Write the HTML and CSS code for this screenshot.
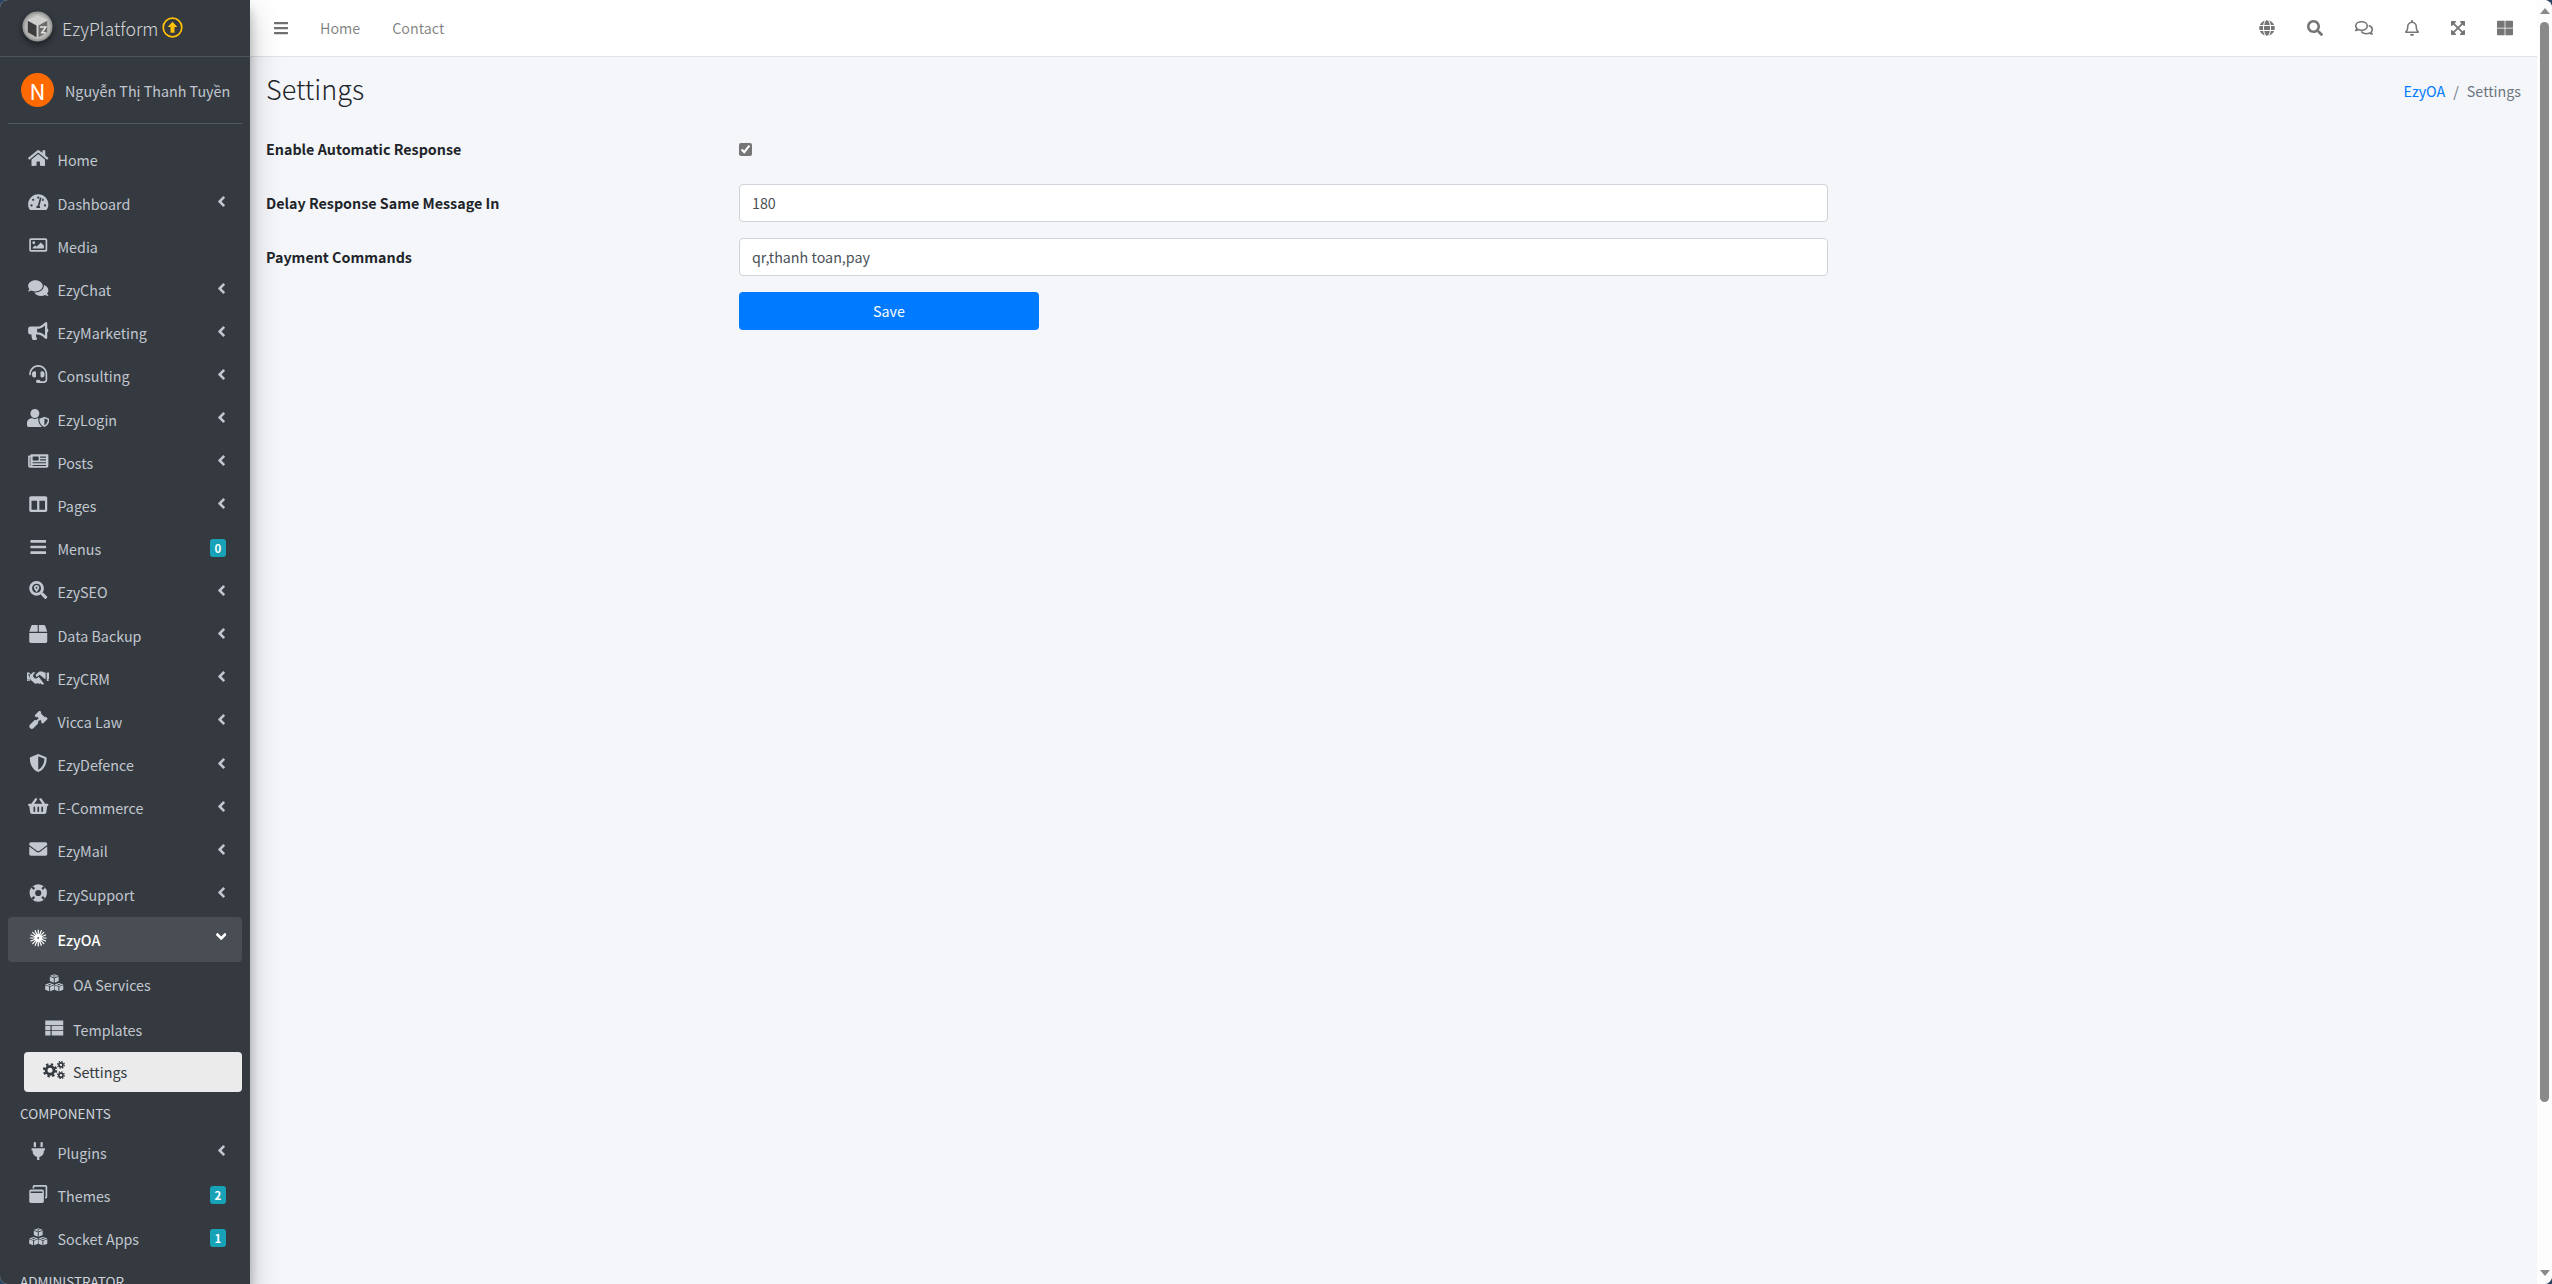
FILE: index.html
```html
<!DOCTYPE html>
<html lang="en">
<head>
<meta charset="utf-8">
<title>Settings</title>
<link rel="stylesheet" href="styles.css">
</head>
<body>
<svg class="defs" aria-hidden="true">
<symbol id="i-left" viewBox="0 0 256 512"><path d="M31.7 239l136-136c9.4-9.4 24.6-9.4 33.9 0l22.6 22.6c9.4 9.4 9.4 24.6 0 33.9L127.9 256l96.4 96.4c9.4 9.4 9.4 24.6 0 33.9L201.7 409c-9.4 9.4-24.6 9.4-33.9 0l-136-136c-9.5-9.4-9.5-24.6-.1-34z"/></symbol>
<symbol id="i-down" viewBox="0 0 320 512"><path d="M143 352.3L7 216.3c-9.4-9.4-9.4-24.6 0-33.9l22.6-22.6c9.4-9.4 24.6-9.4 33.9 0l96.4 96.4 96.4-96.4c9.4-9.4 24.6-9.4 33.9 0l22.6 22.6c9.4 9.4 9.4 24.6 0 33.9l-136 136c-9.2 9.4-24.4 9.4-33.8 0z"/></symbol>
<symbol id="i-home" viewBox="0 0 576 512"><path d="M280.37 148.26L96 300.11V464a16 16 0 0 0 16 16l112.06-.29a16 16 0 0 0 15.92-16V368a16 16 0 0 1 16-16h64a16 16 0 0 1 16 16v95.64a16 16 0 0 0 16 16.05L464 480a16 16 0 0 0 16-16V300L295.67 148.26a12.19 12.19 0 0 0-15.3 0zM571.6 251.47L488 182.56V44.05a12 12 0 0 0-12-12h-56a12 12 0 0 0-12 12v72.61L318.47 43a48 48 0 0 0-61 0L4.34 251.47a12 12 0 0 0-1.6 16.9l25.5 31A12 12 0 0 0 45.15 301l235.22-193.74a12.19 12.19 0 0 1 15.3 0L530.9 301a12 12 0 0 0 16.9-1.6l25.5-31a12 12 0 0 0-1.7-16.93z"/></symbol>
<symbol id="i-gauge" viewBox="0 0 576 512"><path fill-rule="evenodd" d="M288 32C129 32 0 161 0 320c0 53 14 102 39 145 6 9 16 15 27 15h444c11 0 21-6 27-15 25-43 39-92 39-145C576 161 447 32 288 32zM288 96a32 32 0 1 1 0 64 32 32 0 0 1 0-64zM96 384a32 32 0 1 1 0-64 32 32 0 0 1 0 64zM144 224a32 32 0 1 1 0-64 32 32 0 0 1 0 64zM340 424H236a56 56 0 0 1 40-69l56-210c3-13 16-20 29-17s20 16 17 29l-56 208a56 56 0 0 1 18 59zM420 224l-30-8 16-56a32 32 0 1 1 14 64zM480 384a32 32 0 1 1 0-64 32 32 0 0 1 0 64z"/></symbol>
<symbol id="i-image" viewBox="0 0 512 512"><path fill-rule="evenodd" d="M464 64H48C21.500 64 0 85.500 0 112v288c0 26.500 21.500 48 48 48h416c26.500 0 48-21.500 48-48V112c0-26.500-21.500-48-48-48zM458 400H54a6 6 0 0 1-6-6V118a6 6 0 0 1 6-6h404a6 6 0 0 1 6 6v276a6 6 0 0 1-6 6zM128 152a40 40 0 1 0 0 80 40 40 0 0 0 0-80zM96 352h320v-80l-88-88-120 120-40-40-72 72z"/></symbol>
<symbol id="i-comments" viewBox="0 0 576 512"><path d="M416 192c0-88.400-93.100-160-208-160S0 103.600 0 192c0 34.300 14.100 65.900 38 92-13.400 30.200-35.500 54.200-35.800 54.500-2.200 2.300-2.800 5.700-1.500 8.700S4.800 352 8 352c36.600 0 66.900-12.300 88.700-25 32.200 15.700 70.300 25 111.300 25 114.900 0 208-71.600 208-160zm122 220c23.900-26 38-57.700 38-92 0-66.900-53.500-124.200-129.300-148.100.9 6.600 1.300 13.300 1.300 20.100 0 105.900-107.700 192-240 192-10.800 0-21.300-.8-31.700-1.900C207.800 439.600 281.800 480 368 480c41 0 79.100-9.200 111.300-25 21.800 12.700 52.100 25 88.700 25 3.200 0 6.100-1.900 7.300-4.800 1.300-2.900.7-6.300-1.500-8.700-.3-.3-22.400-24.200-35.800-54.500z"/></symbol>
<symbol id="i-bullhorn" viewBox="0 0 576 512"><path d="M576 240c0-23.630-12.950-44.040-32-55.120V32.010C544 23.260 537.020 0 512 0c-7.120 0-14.190 2.380-19.980 7.020l-85.030 68.030C364.280 109.190 310.660 128 256 128H64c-35.350 0-64 28.650-64 64v96c0 35.350 28.650 64 64 64h33.700c-1.390 10.480-2.180 21.140-2.180 32 0 39.770 9.260 77.350 25.560 110.940 5.190 10.690 16.520 17.060 28.400 17.060h74.280c26.050 0 41.690-29.840 25.900-50.560-16.400-21.520-26.150-48.360-26.150-77.440 0-11.110 1.620-21.790 4.410-32H256c54.660 0 108.280 18.810 150.980 52.950l85.030 68.030a32.023 32.023 0 0 0 19.980 7.020c24.920 0 32-22.780 32-32V295.130C563.050 284.040 576 263.630 576 240zm-96 141.420l-33.050-26.440C392.950 311.780 325.120 288 256 288v-96c69.120 0 136.950-23.780 190.950-66.980L480 98.580v282.840z"/></symbol>
<symbol id="i-headset" viewBox="0 0 512 512"><path d="M192 208c0-17.670-14.330-32-32-32h-16c-35.350 0-64 28.650-64 64v48c0 35.350 28.650 64 64 64h16c17.670 0 32-14.330 32-32V208zm176 144c35.350 0 64-28.650 64-64v-48c0-35.350-28.650-64-64-64h-16c-17.670 0-32 14.330-32 32v112c0 17.670 14.330 32 32 32h16zM256 0C113.180 0 4.750 118.830 0 256v16c0 8.840 7.160 16 16 16h16c8.840 0 16-7.160 16-16v-16c0-114.690 93.310-208 208-208s208 93.310 208 208h-.12c.08 2.430.12 165.720.12 165.720 0 23.350-18.930 42.280-42.280 42.280H320c0-26.510-21.490-48-48-48h-32c-26.510 0-48 21.490-48 48s21.490 48 48 48h181.720c49.860 0 90.280-40.420 90.280-90.280V256C507.250 118.830 398.820 0 256 0z"/></symbol>
<symbol id="i-usershield" viewBox="0 0 640 512"><path fill-rule="evenodd" d="M224 256a128 128 0 1 0 0-256 128 128 0 0 0 0 256zM622 270l-115-45a32 32 0 0 0-23 0l-115 45c-11 4-17 14-17 25 0 111 68 188 132 213a32 32 0 0 0 23 0c51-20 132-89 132-213 0-11-6-21-17-25zM496 462V267l96 38c-2 72-44 131-96 157zM320 295c0-10 3-20 8-28-5-1-10-1-16-1h-17a174 174 0 0 1-142 0h-17C61 266 0 327 0 402v62c0 26 21 48 48 48h352c9 0 17-3 24-6-58-42-104-117-104-211z"/></symbol>
<symbol id="i-news" viewBox="0 0 576 512"><path fill-rule="evenodd" d="M552 64H88c-13 0-24 11-24 24v8H24c-13 0-24 11-24 24v272c0 31 25 56 56 56h472c27 0 48-21 48-48V88c0-13-11-24-24-24zM56 400a8 8 0 0 1-8-8V144h16v248a8 8 0 0 1-8 8zM140 128h148a12 12 0 0 1 12 12v88a12 12 0 0 1-12 12H140a12 12 0 0 1-12-12v-88a12 12 0 0 1 12-12zM340 128h168v32H340zM340 208h168v32H340zM128 288h380v32H128zM128 368h380v32H128z"/></symbol>
<symbol id="i-columns" viewBox="0 0 512 512"><path fill-rule="evenodd" d="M464 32H48C21.500 32 0 53.500 0 80v352c0 26.500 21.500 48 48 48h416c26.500 0 48-21.500 48-48V80c0-26.500-21.500-48-48-48zM224 416H64V160h160v256zm224 0H288V160h160v256z"/></symbol>
<symbol id="i-bars" viewBox="0 0 448 512"><path d="M16 132h416c8.837 0 16-7.163 16-16V76c0-8.837-7.163-16-16-16H16C7.163 60 0 67.163 0 76v40c0 8.837 7.163 16 16 16zm0 160h416c8.837 0 16-7.163 16-16v-40c0-8.837-7.163-16-16-16H16c-8.837 0-16 7.163-16 16v40c0 8.837 7.163 16 16 16zm0 160h416c8.837 0 16-7.163 16-16v-40c0-8.837-7.163-16-16-16H16c-8.837 0-16 7.163-16 16v40c0 8.837 7.163 16 16 16z"/></symbol>
<symbol id="i-seo" viewBox="0 0 512 512"><path fill-rule="evenodd" d="M505 442.700L405.300 343c-4.500-4.500-10.600-7-17-7H372c27.600-35.300 44-79.700 44-128C416 93.100 322.900 0 208 0S0 93.100 0 208s93.100 208 208 208c48.300 0 92.700-16.400 128-44v16.300c0 6.400 2.500 12.500 7 17l99.700 99.700c9.400 9.400 24.600 9.400 33.900 0l28.300-28.300c9.400-9.400 9.400-24.600.1-34zM208 336c-70.700 0-128-57.200-128-128 0-70.700 57.200-128 128-128 70.700 0 128 57.200 128 128 0 70.700-57.200 128-128 128zM208 112c-43 0-78 34-78 76 0 33 48 94 66 116a15 15 0 0 0 24 0c18-22 66-83 66-116 0-42-35-76-78-76zm0 104a26 26 0 1 1 0-52 26 26 0 0 1 0 52z"/></symbol>
<symbol id="i-box" viewBox="0 0 512 512"><path d="M509.500 184.600L458.900 32.800C452.400 13.200 434.100 0 413.400 0H272v192h238.700c-.4-2.500-.4-5-1.200-7.400zM240 0H98.600c-20.700 0-39 13.200-45.500 32.800L2.500 184.600c-.8 2.400-.8 4.900-1.200 7.400H240V0zM0 224v240c0 26.500 21.500 48 48 48h416c26.500 0 48-21.500 48-48V224H0z"/></symbol>
<symbol id="i-hands" viewBox="0 0 640 512"><path fill-rule="evenodd" d="M0 128h64c9 0 16 7 16 16v208c0 9-7 16-16 16H0zM32 320a16 16 0 1 0 0 32 16 16 0 0 0 0-32zM640 128h-64c-9 0-16 7-16 16v208c0 9 7 16 16 16h64zM608 320a16 16 0 1 1 0 32 16 16 0 0 1 0-32zM434 96h-72c-8 0-16 3-22 9l-82 75c-17 16-17 44 0 60 15 13 38 12 52-3l50-45 155 125 15-17V128h-50c-14-21-30-32-46-32zM112 352h14l90 81c27 22 66 18 88-8l18 15c18 15 44 12 59-6l31 25c20 17 50 14 66-6 2-3 4-5 5-8L336 250l-30 27c-32 29-82 27-111-5-29-31-27-80 4-109l44-41h-51c-17 0-33 7-45 19l-35 35h-80z"/></symbol>
<symbol id="i-gavel" viewBox="0 0 512 512"><path d="M504 192l-23-23c-9-9-25-9-34 0l-6 6-113-113 6-6c9-9 9-25 0-34L311 0c-9-9-25-9-34 0L164 113c-9 9-9 25 0 34l23 23c9 9 25 9 34 0l6-6 40 40-68 68-6-6c-12-12-33-12-45 0L19 394c-25 25-25 66 0 91l8 8c25 25 66 25 91 0l128-128c12-12 12-33 0-45l-6-6 68-68 40 40-6 6c-9 9-9 25 0 34l23 23c9 9 25 9 34 0l113-113c9-9 9-25 0-34z"/></symbol>
<symbol id="i-shield" viewBox="0 0 512 512"><path d="M466.500 83.700l-192-80a48.150 48.150 0 0 0-36.900 0l-192 80C27.700 91.100 16 108.600 16 128c0 198.500 114.500 335.700 221.500 380.300 11.800 4.900 25.100 4.900 36.900 0C360.100 472.600 496 349.300 496 128c0-19.400-11.700-36.900-29.500-44.300zM256.100 446.300l-.1-381 175.900 73.300c-3.300 151.400-82.100 261.100-175.800 307.700z"/></symbol>
<symbol id="i-basket" viewBox="0 0 576 512"><path fill-rule="evenodd" d="M576 216v16c0 13-11 24-24 24h-8l-26 183c-3 24-24 41-48 41H106c-24 0-45-17-48-41L32 256h-8c-13 0-24-11-24-24v-16c0-13 11-24 24-24h67L198 46c10-14 29-18 44-8 15 10 18 29 8 44l-80 110h236l-80-110c-10-15-7-34 8-44 15-10 34-6 44 8l107 146h67c13 0 24 11 24 24zM312 296c0-13-11-24-24-24s-24 11-24 24v112c0 13 11 24 24 24s24-11 24-24zM424 296c0-13-11-24-24-24s-24 11-24 24v112c0 13 11 24 24 24s24-11 24-24zM200 296c0-13-11-24-24-24s-24 11-24 24v112c0 13 11 24 24 24s24-11 24-24z"/></symbol>
<symbol id="i-envelope" viewBox="0 0 512 512"><path d="M502.300 190.800c3.900-3.100 9.700-.2 9.700 4.700V400c0 26.500-21.500 48-48 48H48c-26.500 0-48-21.500-48-48V195.600c0-5 5.700-7.800 9.700-4.700 22.400 17.400 52.100 39.500 154.100 113.600 21.100 15.400 56.700 47.800 92.200 47.600 35.700.3 72-32.800 92.300-47.600 102-74.100 131.600-96.300 154-113.700zM256 320c23.200.4 56.600-29.200 73.400-41.400 132.700-96.300 142.800-104.700 173.400-128.700 5.800-4.500 9.200-11.500 9.200-18.900v-19c0-26.500-21.500-48-48-48H48C21.500 64 0 85.500 0 112v19c0 7.400 3.400 14.300 9.200 18.900 30.600 23.900 40.700 32.400 173.400 128.700 16.800 12.200 50.200 41.800 73.400 41.400z"/></symbol>
<symbol id="i-ring" viewBox="0 0 512 512"><path fill-rule="evenodd" d="M256 8a248 248 0 1 0 0 496 248 248 0 0 0 0-496zM256 168a88 88 0 1 1 0 176 88 88 0 0 1 0-176zM108 64l60 60a170 170 0 0 0-44 44l-60-60a250 250 0 0 1 44-44zM404 64a250 250 0 0 1 44 44l-60 60a170 170 0 0 0-44-44zM64 404l60-60a170 170 0 0 0 44 44l-60 60a250 250 0 0 1-44-44zM448 404a250 250 0 0 1-44 44l-60-60a170 170 0 0 0 44-44z"/></symbol>
<symbol id="i-burst" viewBox="0 0 32 32"><g stroke="currentColor" stroke-width="2.200" stroke-linecap="round"><path d="M16 2v28M2 16h28M6.100 6.100l19.800 19.800M25.900 6.100L6.100 25.900M10.600 3l10.800 26M21.400 3L10.600 29M3 10.600l26 10.800M29 10.600L3 21.400"/></g><circle cx="16" cy="16" r="6.500"/><circle cx="16" cy="16" r="1.600" fill="#4b5055"/></symbol>
<symbol id="i-cubes" viewBox="0 0 512 450"><g fill-rule="evenodd"><path d="M256 6l114 42-114 42-114-42zM256 32l-44 16 44 16 44-16zM146 66l98 38v112l-98-40zM268 104l98-38v110l-98 40z"/><path transform="translate(-116 216)" d="M256 6l114 42-114 42-114-42zM256 32l-44 16 44 16 44-16zM146 66l98 38v112l-98-40zM268 104l98-38v110l-98 40z"/><path transform="translate(116 216)" d="M256 6l114 42-114 42-114-42zM256 32l-44 16 44 16 44-16zM146 66l98 38v112l-98-40zM268 104l98-38v110l-98 40z"/></g></symbol>
<symbol id="i-table" viewBox="0 0 512 512"><path d="M0 40h512v128H0zM0 192h150v128H0zM182 192h330v128H182zM0 344h150v128H0zM182 344h330v128H182z"/></symbol>
<symbol id="i-cogs" viewBox="0 0 640 512"><circle cx="200" cy="264" r="112" fill="none" stroke="currentColor" stroke-width="80"/><circle cx="200" cy="264" r="172" fill="none" stroke="currentColor" stroke-width="64" stroke-dasharray="68 67"/><circle cx="510" cy="110" r="58" fill="none" stroke="currentColor" stroke-width="48"/><circle cx="510" cy="110" r="96" fill="none" stroke="currentColor" stroke-width="36" stroke-dasharray="38 37.400"/><circle cx="510" cy="402" r="58" fill="none" stroke="currentColor" stroke-width="48"/><circle cx="510" cy="402" r="96" fill="none" stroke="currentColor" stroke-width="36" stroke-dasharray="38 37.400"/></symbol>
<symbol id="i-plug" viewBox="0 0 384 512"><path d="M96 0c18 0 32 14 32 32v112H64V32C64 14 78 0 96 0zM288 0c18 0 32 14 32 32v112h-64V32c0-18 14-32 32-32zM16 176h352c9 0 16 7 16 16v32c0 9-7 16-16 16h-16v32c0 77-55 142-128 157v83h-64v-83C87 414 32 349 32 272v-32H16c-9 0-16-7-16-16v-32c0-9 7-16 16-16z"/></symbol>
<symbol id="i-themes" viewBox="0 0 512 512"><path fill-rule="evenodd" d="M48 128h320c26 0 48 22 48 48v288c0 26-22 48-48 48H48c-26 0-48-22-48-48V176c0-26 22-48 48-48zM40 184v40h336v-40zM144 0h320c26 0 48 22 48 48v288c0 26-22 48-48 48h-16v-48h16V48H144v48H96V48c0-26 22-48 48-48z"/></symbol>
<symbol id="i-globe" viewBox="0 0 496 512"><path d="M336.500 160C322 70.700 287.800 8 248 8s-74 62.700-88.500 152h177zM152 256c0 22.200 1.200 43.500 3.300 64h185.300c2.100-20.500 3.300-41.800 3.300-64s-1.200-43.500-3.300-64H155.300c-2.100 20.500-3.300 41.800-3.300 64zm324.700-96c-28.600-67.900-86.500-120.400-158-141.600 24.400 33.800 41.200 84.700 50 141.600h108zM177.200 18.400C105.800 39.600 47.800 92.100 19.300 160h108c8.700-56.900 25.500-107.800 49.900-141.600zM487.400 192H372.700c2.100 21 3.300 42.500 3.300 64s-1.200 43-3.300 64h114.600c5.500-20.500 8.600-41.800 8.600-64s-3.100-43.500-8.500-64zM120 256c0-21.500 1.200-43 3.300-64H8.600C3.200 212.500 0 233.800 0 256s3.200 43.500 8.600 64h114.600c-2-21-3.200-42.500-3.200-64zm39.500 96c14.500 89.300 48.700 152 88.500 152s74-62.700 88.500-152h-177zm159.300 141.600c71.400-21.200 129.400-73.700 158-141.600h-108c-8.800 56.900-25.600 107.800-50 141.600zM19.300 352c28.600 67.900 86.500 120.400 158 141.600-24.400-33.800-41.200-84.700-50-141.600h-108z"/></symbol>
<symbol id="i-search" viewBox="0 0 512 512"><path d="M505 442.700L405.300 343c-4.500-4.500-10.600-7-17-7H372c27.600-35.300 44-79.700 44-128C416 93.100 322.900 0 208 0S0 93.100 0 208s93.100 208 208 208c48.300 0 92.700-16.400 128-44v16.300c0 6.400 2.500 12.500 7 17l99.700 99.700c9.400 9.400 24.600 9.400 33.900 0l28.300-28.300c9.400-9.400 9.400-24.600.1-34zM208 336c-70.700 0-128-57.200-128-128 0-70.700 57.200-128 128-128 70.700 0 128 57.200 128 128 0 70.700-57.200 128-128 128z"/></symbol>
<symbol id="i-chat" viewBox="0 0 576 512"><g fill="none" stroke="currentColor" stroke-width="50" stroke-linejoin="round"><path d="M208 56C104 56 24 114 24 192c0 32 14 60 38 84-8 24-24 42-38 56 30-2 56-14 76-28 32 14 68 24 108 24 104 0 184-58 184-136S312 56 208 56z"/><path d="M440 178c64 20 112 70 112 128 0 32-14 60-38 84 8 24 24 42 38 56-30-2-56-14-76-28-32 14-68 24-108 24-72 0-136-30-166-76"/></g></symbol>
<symbol id="i-bell" viewBox="0 0 448 512"><path d="M224 512c35 0 64-29 64-64H160c0 35 29 64 64 64zM439 362c-19-21-55-52-55-154 0-78-54-140-128-155V32a32 32 0 0 0-64 0v21C118 68 64 130 64 208c0 102-36 133-55 154-6 6-9 14-9 22 0 16 13 32 32 32h384c19 0 32-16 32-32 0-8-3-16-9-22zM67 368c21-28 45-73 45-160v-1c0-62 50-111 112-111s112 49 112 112c0 87 24 132 45 160z"/></symbol>
<symbol id="i-expand" viewBox="0 0 448 512"><path d="M448 344v112a24 24 0 0 1-24 24H312c-21 0-32-26-17-41l36-36-107-107-107 107 36 36c15 15 4 41-17 41H24a24 24 0 0 1-24-24V344c0-21 26-32 41-17l36 36 107-107L77 149l-36 36c-15 15-41 4-41-17V56a24 24 0 0 1 24-24h112c21 0 32 26 17 41l-36 36 107 107 107-107-36-36c-15-15-4-41 17-41h112a24 24 0 0 1 24 24v112c0 21-26 32-41 17l-36-36-107 107 107 107 36-36c15-15 41-4 41 17z"/></symbol>
<symbol id="i-grid" viewBox="0 0 512 512"><path d="M24 24h220v220H0V48c0-13 11-24 24-24zM268 24h220c13 0 24 11 24 24v196H268zM0 268h244v220H24c-13 0-24-11-24-24zM268 268h244v196c0 13-11 24-24 24H268z"/></symbol>
<symbol id="i-up" viewBox="0 0 24 24"><circle cx="12" cy="12" r="10.600" fill="none" stroke="currentColor" stroke-width="2"/><path d="M12 5.500l5.600 6h-3.300V18H9.700v-6.500H6.400z"/></symbol>
</svg>

<div class="app">
  <aside class="sidebar">
    <div class="brand">
      <svg class="logo" viewBox="0 0 32 32"><circle cx="16" cy="16" r="15.500" fill="#9a9a98"/><circle cx="16" cy="16" r="13.500" fill="#b5b5b3"/><path d="M16 4l10 5v13l-10 6-10-6V9z" fill="#cfcfcd"/><path d="M6 10l9 5v12l-9-5z" fill="#3d3d3d"/><path d="M17 15l9-5v12l-9 5z" fill="#6d6d6b"/><path d="M18.500 16.500h6l-4 6h4" fill="none" stroke="#e4e4e2" stroke-width="1.600"/></svg>
      <span class="brand-name">EzyPlatform</span>
      <svg class="brand-up"><use href="#i-up"/></svg>
    </div>
    <div class="user">
      <span class="avatar">N</span>
      <span class="user-name">Nguyễn Thị Thanh Tuyền</span>
    </div>
    <nav class="nav">
      <a class="item"><svg class="ic"><use href="#i-home"/></svg><span class="lbl">Home</span></a>
      <a class="item"><svg class="ic"><use href="#i-gauge"/></svg><span class="lbl">Dashboard</span><svg class="chev"><use href="#i-left"/></svg></a>
      <a class="item"><svg class="ic"><use href="#i-image"/></svg><span class="lbl">Media</span></a>
      <a class="item"><svg class="ic"><use href="#i-comments"/></svg><span class="lbl">EzyChat</span><svg class="chev"><use href="#i-left"/></svg></a>
      <a class="item"><svg class="ic"><use href="#i-bullhorn"/></svg><span class="lbl">EzyMarketing</span><svg class="chev"><use href="#i-left"/></svg></a>
      <a class="item"><svg class="ic"><use href="#i-headset"/></svg><span class="lbl">Consulting</span><svg class="chev"><use href="#i-left"/></svg></a>
      <a class="item"><svg class="ic"><use href="#i-usershield"/></svg><span class="lbl">EzyLogin</span><svg class="chev"><use href="#i-left"/></svg></a>
      <a class="item"><svg class="ic"><use href="#i-news"/></svg><span class="lbl">Posts</span><svg class="chev"><use href="#i-left"/></svg></a>
      <a class="item"><svg class="ic"><use href="#i-columns"/></svg><span class="lbl">Pages</span><svg class="chev"><use href="#i-left"/></svg></a>
      <a class="item"><svg class="ic"><use href="#i-bars"/></svg><span class="lbl">Menus</span><span class="badge">0</span></a>
      <a class="item"><svg class="ic"><use href="#i-seo"/></svg><span class="lbl">EzySEO</span><svg class="chev"><use href="#i-left"/></svg></a>
      <a class="item"><svg class="ic"><use href="#i-box"/></svg><span class="lbl">Data Backup</span><svg class="chev"><use href="#i-left"/></svg></a>
      <a class="item"><svg class="ic"><use href="#i-hands"/></svg><span class="lbl">EzyCRM</span><svg class="chev"><use href="#i-left"/></svg></a>
      <a class="item"><svg class="ic"><use href="#i-gavel"/></svg><span class="lbl">Vicca Law</span><svg class="chev"><use href="#i-left"/></svg></a>
      <a class="item"><svg class="ic"><use href="#i-shield"/></svg><span class="lbl">EzyDefence</span><svg class="chev"><use href="#i-left"/></svg></a>
      <a class="item"><svg class="ic"><use href="#i-basket"/></svg><span class="lbl">E-Commerce</span><svg class="chev"><use href="#i-left"/></svg></a>
      <a class="item"><svg class="ic"><use href="#i-envelope"/></svg><span class="lbl">EzyMail</span><svg class="chev"><use href="#i-left"/></svg></a>
      <a class="item"><svg class="ic"><use href="#i-ring"/></svg><span class="lbl">EzySupport</span><svg class="chev"><use href="#i-left"/></svg></a>
      <a class="item open"><svg class="ic"><use href="#i-burst"/></svg><span class="lbl">EzyOA</span><svg class="chev chev-down"><use href="#i-down"/></svg></a>
      <a class="item sub sub-first"><svg class="ic"><use href="#i-cubes"/></svg><span class="lbl">OA Services</span></a>
      <a class="item sub sub-second"><svg class="ic"><use href="#i-table"/></svg><span class="lbl">Templates</span></a>
      <a class="item sub current"><svg class="ic"><use href="#i-cogs"/></svg><span class="lbl">Settings</span></a>
      <div class="section">COMPONENTS</div>
      <a class="item"><svg class="ic"><use href="#i-plug"/></svg><span class="lbl">Plugins</span><svg class="chev"><use href="#i-left"/></svg></a>
      <a class="item"><svg class="ic"><use href="#i-themes"/></svg><span class="lbl">Themes</span><span class="badge">2</span></a>
      <a class="item"><svg class="ic"><use href="#i-cubes"/></svg><span class="lbl">Socket Apps</span><span class="badge">1</span></a>
      <div class="section">ADMINISTRATOR</div>
    </nav>
  </aside>

  <div class="main">
    <header class="topbar">
      <svg class="top-burger"><use href="#i-bars"/></svg>
      <a class="top-link">Home</a>
      <a class="top-link">Contact</a>
      <div class="top-icons">
        <svg class="top-ic"><use href="#i-globe"/></svg>
        <svg class="top-ic"><use href="#i-search"/></svg>
        <svg class="top-ic top-ic-wide"><use href="#i-chat"/></svg>
        <svg class="top-ic top-ic-narrow"><use href="#i-bell"/></svg>
        <svg class="top-ic top-ic-narrow"><use href="#i-expand"/></svg>
        <svg class="top-ic"><use href="#i-grid"/></svg>
      </div>
    </header>
    <section class="content">
      <div class="heading">
        <h1 class="title">Settings</h1>
        <div class="crumbs"><a class="crumb-link">EzyOA</a><span class="crumb-sep">/</span><span class="crumb-cur">Settings</span></div>
      </div>
      <form class="form">
        <label class="field-label">Enable Automatic Response</label>
        <div class="field"><input class="check" type="checkbox" checked></div>
        <label class="field-label">Delay Response Same Message In</label>
        <div class="field"><input class="input" type="text" value="180"></div>
        <label class="field-label">Payment Commands</label>
        <div class="field"><input class="input" type="text" value="qr,thanh toan,pay"></div>
        <span></span>
        <div class="field"><button class="save" type="button">Save</button></div>
      </form>
    </section>
  </div>

  <div class="scrollbar">
    <span class="arrow arrow-up"></span>
    <span class="thumb"></span>
    <span class="arrow arrow-down"></span>
  </div>
</div>
</body>
</html>
```
FILE: styles.css
```css
* { box-sizing: border-box; }
html, body { margin: 0; height: 100%; overflow: hidden; }
html { background: #2b4465; }
body {
  font-family: "Noto Sans CJK SC", "Noto Sans", sans-serif;
  font-size: 14.300px;
  color: #212529;
}
.defs { display: none; }
svg { fill: currentColor; display: block; flex: none; }

.app { display: flex; height: 1284px; background: #f4f6f9; border-radius: 8px; overflow: hidden; }

/* sidebar */
.sidebar {
  width: 250px;
  flex: none;
  height: 100%;
  overflow: hidden;
  background: #343a40;
  color: #c2c7d0;
  box-shadow: 0 14px 28px rgba(0,0,0,.25), 0 10px 10px rgba(0,0,0,.22);
  position: relative;
  z-index: 2;
}
.brand {
  height: 57px;
  display: flex;
  align-items: center;
  padding-left: 22px;
  border-bottom: 1px solid #4b545c;
}
.logo { width: 31px; height: 31px; margin-top: -3px; border-radius: 50%; box-shadow: 0 3px 6px rgba(0,0,0,.45); }
.brand-name { margin-left: 9px; font-size: 17.800px; font-weight: 300; color: rgba(255,255,255,.8); }
.brand-up { width: 21px; height: 21px; margin-left: 4px; color: #ffc107; margin-top: -2px; }
.user {
  height: 67px;
  margin: 0 8px;
  display: flex;
  align-items: center;
  padding-left: 13px;
  border-bottom: 1px solid #4f5962;
}
.avatar {
  width: 33px; height: 34px;
  border-radius: 50%;
  background: #ff6a00;
  color: #fff;
  font-size: 22px;
  display: flex; align-items: center; justify-content: center;
  flex: none;
}
.user-name { margin-left: 11px; white-space: nowrap; }

.nav { padding: 14.400px 8px 0; display: flex; flex-direction: column; }
.item {
  height: 43.200px;
  display: flex;
  align-items: center;
  padding-left: 18.500px;
  padding-right: 16px;
  border-radius: 4px;
  flex: none;
}
.ic { width: 22.500px; height: 18px; margin-top: -3px; }
.lbl { margin-left: 8.500px; white-space: nowrap; }
.chev { width: 9px; height: 17px; margin-left: auto; margin-top: -3px; }
.chev-down { width: 10.500px; color: #fff; margin-top: -5px; }
.badge {
  margin-left: auto;
  min-width: 16px; height: 18px;
  background: #17a2b8;
  color: #fff;
  border-radius: 3px;
  font-size: 11.500px;
  font-weight: 700;
  display: flex; align-items: center; justify-content: center;
  margin-top: -2px;
}
.open { height: 45px; margin-top: 1px; background: rgba(255,255,255,.1); color: #fff; }
.open .lbl { font-weight: 500; }
.sub { margin-left: 16px; }
.sub .lbl { margin-left: 8px; }
.sub-first { margin-top: 1px; height: 44px; }
.sub-second { height: 45px; }
.current { height: 40px; background: rgba(255,255,255,.9); color: #343a40; }
.section { height: 39px; flex: none; padding: 3px 0 0 12px; display: flex; align-items: center; font-size: 13.500px; color: #d0d4db; white-space: nowrap; }

/* main */
.main { flex: 1; min-width: 0; display: flex; flex-direction: column; }
.topbar {
  height: 57px;
  flex: none;
  background: #fff;
  border-bottom: 1px solid #dee2e6;
  display: flex;
  align-items: center;
  padding-left: 24px;
}
.top-burger { width: 14px; height: 16px; margin-top: -1px; color: #707070; }
.top-link { color: rgba(0,0,0,.5); margin-top: -1px; }
.top-burger + .top-link { margin-left: 32px; }
.top-link + .top-link { margin-left: 32px; }
.top-icons { margin-left: auto; margin-right: 24px; display: flex; gap: 32px; color: #757575; margin-top: -1px; }
.top-ic { width: 16px; height: 16px; }
.top-ic-wide { width: 18px; }
.top-ic-narrow { width: 14px; }

.content { padding: 0 16px; flex: 1; }
.heading { height: 73px; display: flex; align-items: center; justify-content: space-between; }
.title { margin: 0; font-size: 27px; font-weight: 300; color: #212529; line-height: 1.2; margin-top: -9px; }
.crumbs { display: flex; margin-top: -7px; }
.crumb-link { color: #007bff; }
.crumb-sep { margin: 0 8px; color: #6c757d; }
.crumb-cur { color: #6c757d; }

.form { display: grid; grid-template-columns: 473px 1089px; grid-auto-rows: 38px; row-gap: 16px; }
.field-label { display: flex; align-items: center; font-weight: 700; padding-bottom: 1px; }
.field { display: flex; align-items: center; }
.check { width: 13px; height: 13px; margin: 0; accent-color: #767676; }
.input {
  width: 100%; height: 38px;
  border: 1px solid #ced4da;
  border-radius: 4px;
  background: #fff;
  padding: 5px 12px 6px;
  font: inherit;
  color: #495057;
}
.save {
  width: 300px; height: 38px;
  border: 0;
  border-radius: 4px;
  background: #007bff;
  color: #fff;
  font: inherit;
  padding: 0 0 1px;
}

/* scrollbar */
.scrollbar {
  width: 15px;
  flex: none;
  background: #fdfdfd;
  display: flex;
  flex-direction: column;
  align-items: center;
  padding: 8px 0;
}
.arrow { width: 0; height: 0; border-left: 5px solid transparent; border-right: 5px solid transparent; flex: none; }
.arrow-up { border-bottom: 6px solid #8a8a8a; }
.arrow-down { border-top: 6px solid #8a8a8a; margin-top: auto; }
.thumb { width: 9px; height: 1080px; margin-top: 8px; background: #8a8a8a; border-radius: 5px; flex: none; }
```
